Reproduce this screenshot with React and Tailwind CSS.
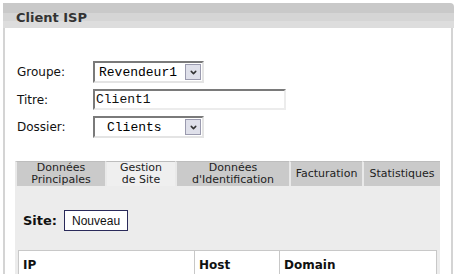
import { ChevronDown } from "lucide-react";

const tabs = [
  { label: ["Données", "Principales"], w: "w-[90px]" },
  { label: ["Gestion", "de Site"], w: "w-[70px]", active: true },
  { label: ["Données", "d'Identification"], w: "w-[114px]" },
  { label: ["Facturation"], w: "w-[73px]" },
  { label: ["Statistiques"], w: "w-[78px]" },
];

function Select({ value, w, center }) {
  return (
    <div
      className={`flex items-center h-[22px] ${w} bg-white border-2 border-t-[#7a7a7a] border-l-[#7a7a7a] border-r-[#e4e4e4] border-b-[#e4e4e4]`}
    >
      <span
        className={`flex-1 text-[13px] leading-none text-black ${center ? "pl-[12px]" : "pl-[4px]"}`}
        style={{ fontFamily: '"Liberation Mono", monospace' }}
      >
        {value}
      </span>
      <span className="flex items-center justify-center w-[16px] h-[16px] mr-[1px] bg-[#dfe0ea] border border-[#9a9aae]">
        <ChevronDown className="w-[9px] h-[9px] text-[#333]" strokeWidth={4} />
      </span>
    </div>
  );
}

export default function App() {
  return (
    <div
      className="w-[456px] h-[274px] overflow-hidden bg-white pt-[3px] pl-[3px] text-[#222]"
      style={{ fontFamily: '"DejaVu Sans", Verdana, sans-serif' }}
    >
      <div className="w-[451px]">
        <div className="rounded-tr-[4px] overflow-hidden">
          <div className="h-[10px] bg-[#c9c9c9]" />
          <div className="h-[8px] bg-[#d5d5d5]" />
          <div className="h-[7px] bg-[#dddddd]" />
        </div>
        <div className="-mt-[21px] h-[22px] pl-[13px] flex items-center text-[13px] font-bold text-[#333] relative">
          Client ISP
        </div>
      </div>

      <div className="w-[450px] h-[280px] border-l-2 border-r-2 border-[#d4d4d4] pl-[10px] -mt-px">
        <div className="pt-[33px] pl-[2px] grid grid-cols-[76px_1fr] gap-y-[6px] items-center text-[12px] text-[#111]">
          <span>Groupe:</span>
          <Select value="Revendeur1" w="w-[111px]" />
          <span>Titre:</span>
          <div
            className="h-[21px] w-[193px] bg-white border-2 border-t-[#7a7a7a] border-l-[#7a7a7a] border-r-[#ececec] border-b-[#ececec] flex items-center pl-[1px] text-[13px] leading-none"
            style={{ fontFamily: '"Liberation Mono", monospace' }}
          >
            Client1
          </div>
          <span>Dossier:</span>
          <Select value="Clients" w="w-[111px]" center />
        </div>

        <div className="mt-[23px] w-[425px]">
          <div className="flex h-[25px] text-[11px] leading-[12px] text-[#222]">
            {tabs.map((t, i) => (
              <div
                key={i}
                className={`${t.w} flex flex-col items-center justify-center text-center border-l-2 border-t border-l-[#e9e9e9] border-t-[#bdbdbd] ${
                  t.active ? "bg-[#efefef]" : "bg-[#cacaca]"
                } ${i === 0 ? "border-l-[#d8d8d8]" : ""}`}
              >
                {t.label.map((l) => (
                  <span key={l}>{l}</span>
                ))}
              </div>
            ))}
          </div>
          <div className="bg-[#ececec] h-[120px] pt-[24px] px-[3px]">
            <div className="flex items-center pl-[5px]">
              <span className="text-[13px] font-bold text-[#111] mr-[7px]">Site:</span>
              <button
                className="h-[21px] w-[64px] bg-white border border-[#2a2a5a] text-[12px] text-[#111]"
                style={{ fontFamily: '"Liberation Sans", Arial, sans-serif' }}
              >
                Nouveau
              </button>
            </div>
            <div className="mt-[19px] bg-white border border-[#c8c8c8] grid grid-cols-[175px_85px_1fr] h-[60px] text-[12px] font-bold text-[#111]">
              <div className="px-[4px] pt-[5px]">IP</div>
              <div className="px-[4px] pt-[5px] border-l border-[#c8c8c8]">Host</div>
              <div className="px-[4px] pt-[5px] border-l border-[#c8c8c8]">Domain</div>
            </div>
          </div>
        </div>
      </div>
    </div>
  );
}
